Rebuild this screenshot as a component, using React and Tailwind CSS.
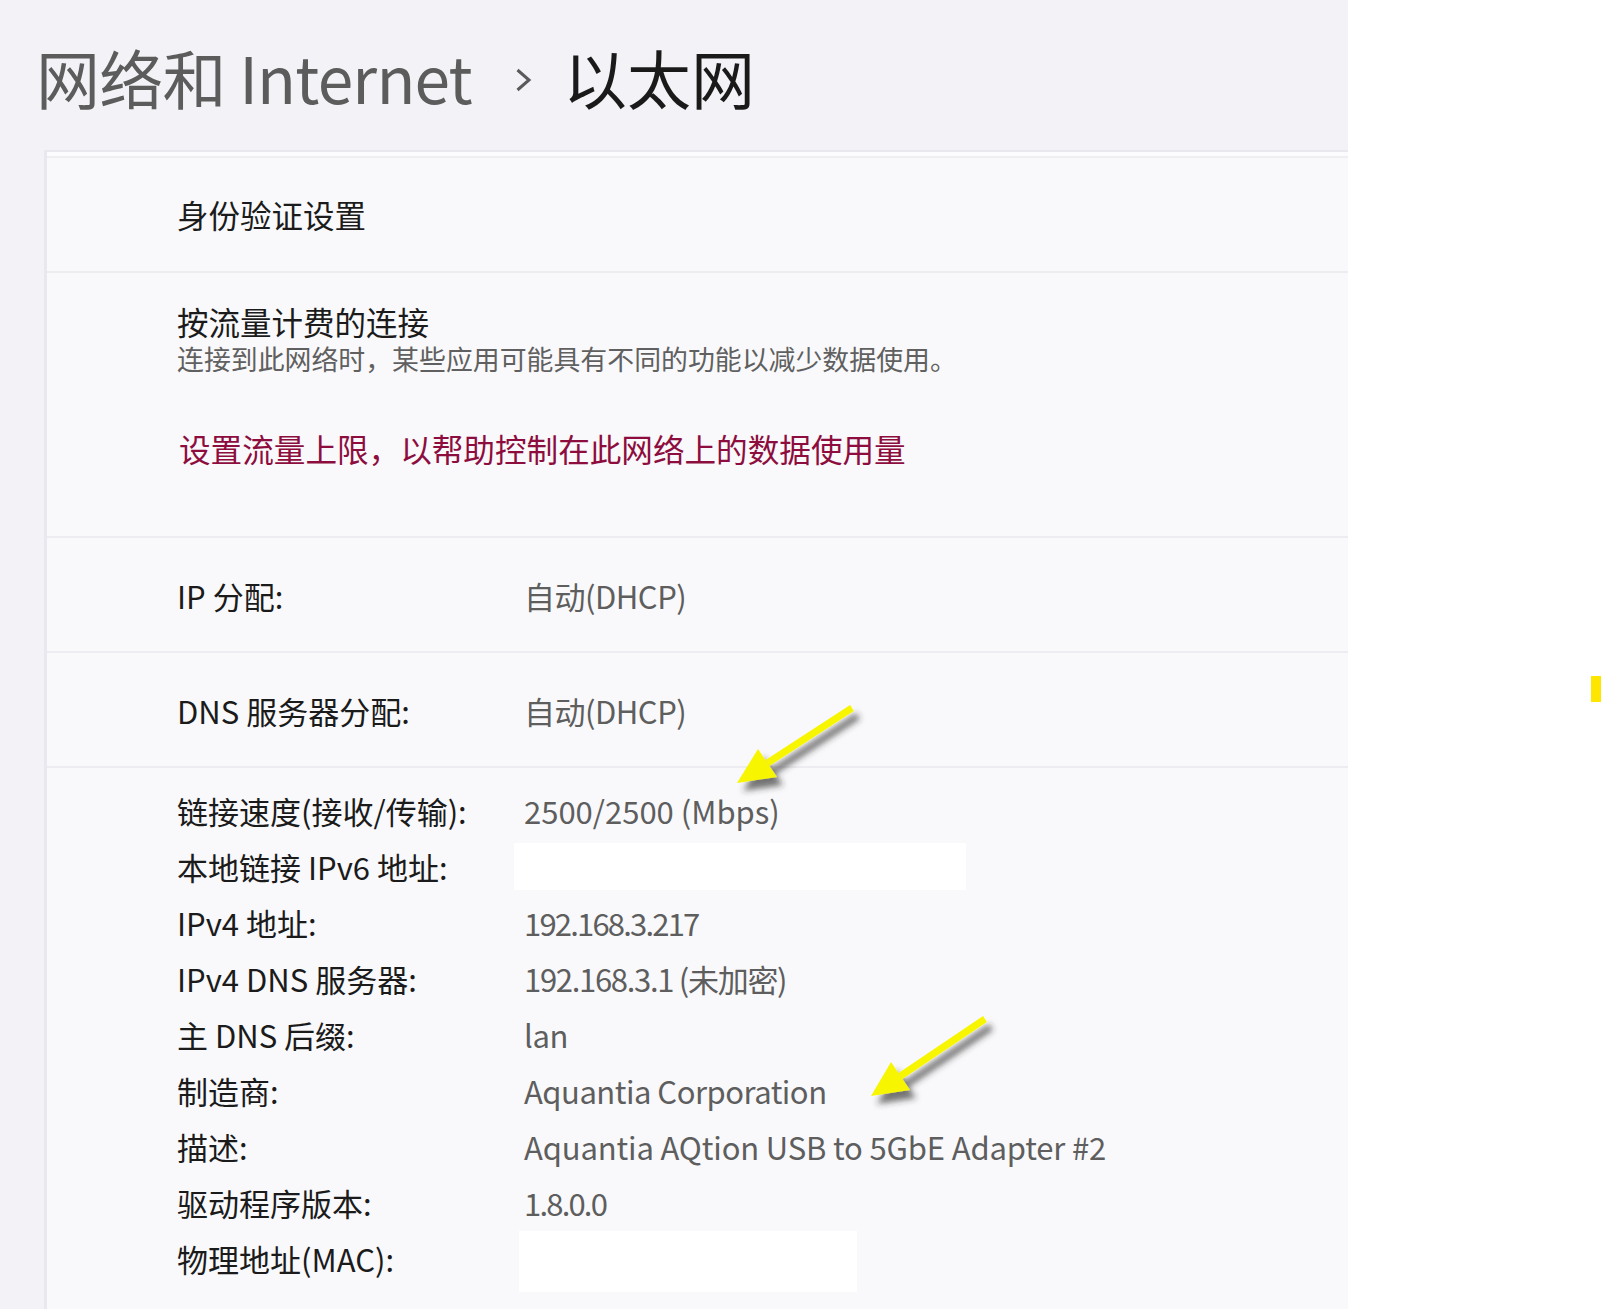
import React from 'react';

const font = { fontFamily: '"Noto Sans CJK SC", "Noto Sans", sans-serif' };

const details = [
  { label: '链接速度(接收/传输):', value: '2500/2500 (Mbps)', track: 'tracking-[0px]' },
  { label: '本地链接 IPv6 地址:', redact: 'ipv6' },
  { label: 'IPv4 地址:', value: '192.168.3.217', track: 'tracking-[-1.8px]' },
  { label: 'IPv4 DNS 服务器:', value: '192.168.3.1 (未加密)', track: 'tracking-[-1.3px]' },
  { label: '主 DNS 后缀:', value: 'lan', track: 'tracking-[-0.4px]' },
  { label: '制造商:', value: 'Aquantia Corporation', track: 'tracking-[-0.5px]' },
  { label: '描述:', value: 'Aquantia AQtion USB to 5GbE Adapter #2', track: 'tracking-[-0.15px]' },
  { label: '驱动程序版本:', value: '1.8.0.0', track: 'tracking-[-1.8px]' },
  { label: '物理地址(MAC):', redact: 'mac' },
];

function Arrow({ tail, tip, left, right }) {
  return (
    <g filter="url(#shadow)">
      <line x1={tail[0]} y1={tail[1]} x2={(left[0] + right[0]) / 2} y2={(left[1] + right[1]) / 2} stroke="#f8f500" strokeWidth="7" />
      <polygon points={`${tip[0]},${tip[1]} ${left[0]},${left[1]} ${right[0]},${right[1]}`} fill="#f8f500" />
    </g>
  );
}

function SimpleRow({ label, value }) {
  return (
    <div className="h-[115px] pt-[42px] pl-[130px] flex items-start border-b-2 border-[#ededf1]">
      <span className="w-[347px] text-[31px] leading-[31px] text-[#1b1b1b]">{label}</span>
      <span className="text-[31px] leading-[31px] tracking-[-0.5px] text-[#5e5e5e]">{value}</span>
    </div>
  );
}

export default function App() {
  return (
    <div className="relative w-[1601px] h-[1309px] bg-white overflow-hidden" style={font}>
      <div className="w-[1348px] h-full bg-[#f3f3f7] flex flex-col">
        <div className="h-[150px] shrink-0 pl-[36px] pt-[44px] flex items-start">
          <span className="w-[435px] whitespace-nowrap text-[64px] leading-[64px] tracking-[-0.8px] text-[#5c5c5c]">网络和 Internet</span>
          <svg className="ml-[44px] mt-[24px]" width="17" height="24" viewBox="0 0 17 24">
            <path d="M2.5 2 L14 12 L2.5 22" fill="none" stroke="#5a5a5a" strokeWidth="3" />
          </svg>
          <span className="ml-[31px] whitespace-nowrap text-[64px] leading-[64px] text-[#1a1a1a]">以太网</span>
        </div>

        <div className="ml-[44px] flex-1 bg-[#f9f9fb] border-l-[3px] border-t-2 border-[#e8e8ee]">
          <div className="h-[6px] bg-[#fcfcfe] border-b-2 border-[#efeff3]" />

          <div className="h-[115px] pt-[41px] pl-[130px] border-b-2 border-[#ededf1]">
            <div className="text-[31.5px] leading-[31px] text-[#1b1b1b]">身份验证设置</div>
          </div>

          <div className="h-[265px] pt-[33px] pl-[130px] border-b-2 border-[#ededf1]">
            <div className="text-[31.5px] leading-[31px] text-[#1b1b1b]">按流量计费的连接</div>
            <div className="mt-[9px] text-[26.9px] leading-[26px] text-[#606060]">连接到此网络时，某些应用可能具有不同的功能以减少数据使用。</div>
            <div className="mt-[61px] ml-[2px] text-[31.6px] leading-[31px] text-[#8c0d3e]">设置流量上限，以帮助控制在此网络上的数据使用量</div>
          </div>

          <SimpleRow label="IP 分配:" value="自动(DHCP)" />
          <SimpleRow label="DNS 服务器分配:" value="自动(DHCP)" />

          <div className="pt-[14px] pl-[130px]">
            {details.map((d) => (
              <div key={d.label} className="h-[56px] flex items-center">
                <span className="w-[347px] text-[31px] leading-[31px] text-[#1b1b1b]">{d.label}</span>
                {d.redact === 'ipv6' && <div className="-ml-[10px] w-[452px] h-[47px] bg-white" />}
                {d.redact === 'mac' && <div className="-ml-[5px] self-start mt-[1px] w-[338px] h-[61px] bg-white" />}
                {d.value && (
                  <span className={`whitespace-nowrap text-[31px] leading-[31px] text-[#5e5e5e] ${d.track}`}>{d.value}</span>
                )}
              </div>
            ))}
          </div>
        </div>
      </div>

      <div className="absolute left-[1591px] top-[676px] w-[10px] h-[26px] bg-[#ffe600]" />

      <svg className="absolute inset-0 pointer-events-none" width="1601" height="1309" viewBox="0 0 1601 1309">
        <defs>
          <filter id="shadow" x="-20%" y="-20%" width="150%" height="150%">
            <feDropShadow dx="6" dy="8" stdDeviation="3" floodColor="#2a2a2a" floodOpacity="0.65" />
          </filter>
        </defs>
        <Arrow tail={[852, 708]} tip={[737, 783]} left={[758, 749]} right={[777, 777]} />
        <Arrow tail={[985, 1019]} tip={[871, 1096]} left={[891, 1062]} right={[910, 1090]} />
      </svg>
    </div>
  );
}
